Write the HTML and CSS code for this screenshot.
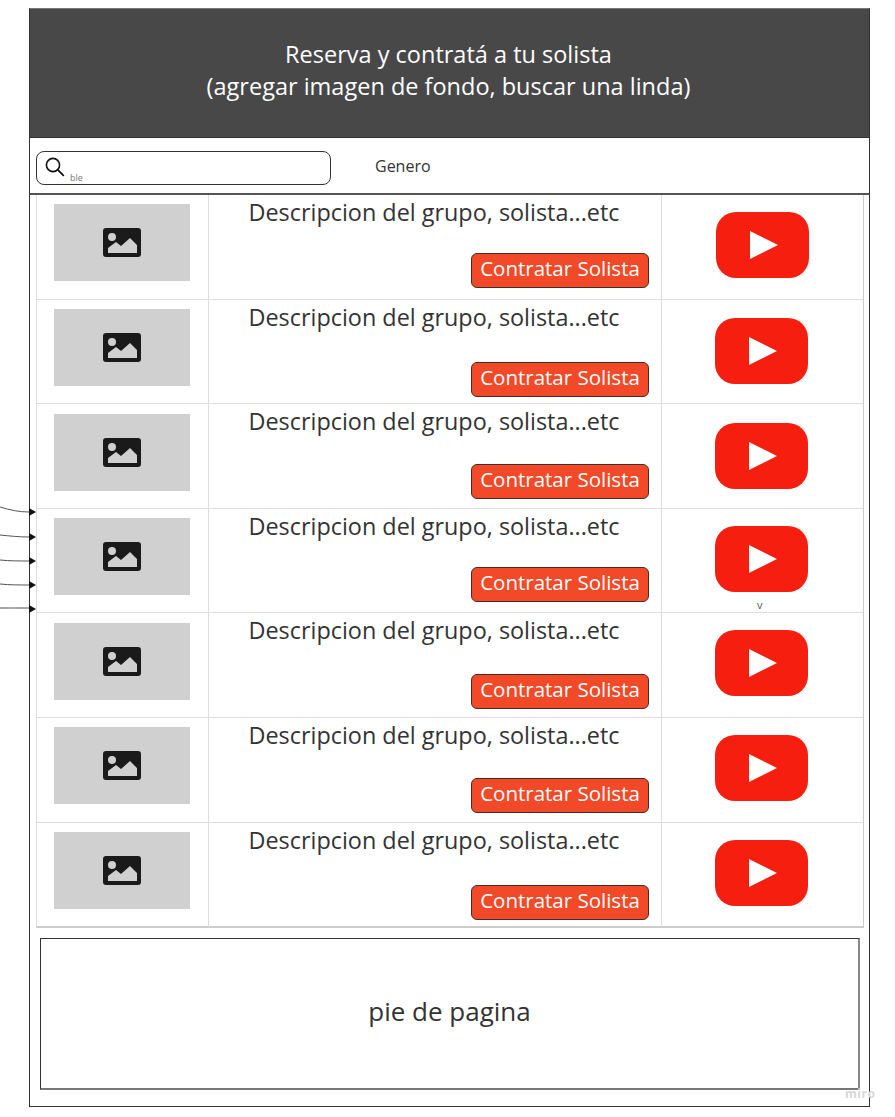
FILE: index.html
```html
<!DOCTYPE html>
<html lang="es">

<head>
    <meta charset="UTF-8">
    <meta name="viewport" content="width=device-width, initial-scale=1.0">
    <title>Reserva y contrata a tu solista</title>
    <link rel="stylesheet" href="styles.css">
</head>

<body>
    <svg class="defs" width="0" height="0" aria-hidden="true">
        <symbol id="icon-image" viewBox="0 0 38 29">
            <path fill-rule="evenodd" d="M3 0h32a3 3 0 0 1 3 3v23a3 3 0 0 1-3 3H3a3 3 0 0 1-3-3V3a3 3 0 0 1 3-3zM9 5a4 4 0 1 0 0 8 4 4 0 0 0 0-8zM5 25h29v-8l-7-7-9 8-5-4-8 6v5z" fill="#1a1a1a"/>
        </symbol>
        <symbol id="icon-play" viewBox="0 0 93 66">
            <rect width="93" height="66" rx="20" fill="#f61e0f"/>
            <path d="M34 19l28 14-28 14z" fill="#fff"/>
        </symbol>
    </svg>

    <div class="frame">
        <header class="hero">
            <p>Reserva y contratá a tu solista</p>
            <p>(agregar imagen de fondo, buscar una linda)</p>
        </header>

        <div class="toolbar">
            <div class="search">
                <svg class="search-icon" viewBox="0 0 20 20" width="20" height="20">
                    <circle cx="8" cy="8" r="6.6" fill="none" stroke="#111" stroke-width="1.6"/>
                    <path d="M12.8 12.8l6 6" stroke="#111" stroke-width="1.8"/>
                </svg>
                <span class="search-hint">ble</span>
            </div>
            <span class="genre">Genero</span>
        </div>

        <div class="list">
            <div class="row row-1">
                <div class="cell"><div class="thumb"><svg class="thumb-icon"><use href="#icon-image"/></svg></div></div>
                <div class="cell info">
                    <p class="desc">Descripcion del grupo, solista...etc</p>
                    <button class="hire">Contratar Solista</button>
                </div>
                <div class="cell video"><svg class="play"><use href="#icon-play"/></svg></div>
            </div>
            <div class="row row-2">
                <div class="cell"><div class="thumb"><svg class="thumb-icon"><use href="#icon-image"/></svg></div></div>
                <div class="cell info">
                    <p class="desc">Descripcion del grupo, solista...etc</p>
                    <button class="hire">Contratar Solista</button>
                </div>
                <div class="cell video"><svg class="play"><use href="#icon-play"/></svg></div>
            </div>
            <div class="row row-3">
                <div class="cell"><div class="thumb"><svg class="thumb-icon"><use href="#icon-image"/></svg></div></div>
                <div class="cell info">
                    <p class="desc">Descripcion del grupo, solista...etc</p>
                    <button class="hire">Contratar Solista</button>
                </div>
                <div class="cell video"><svg class="play"><use href="#icon-play"/></svg></div>
            </div>
            <div class="row row-4">
                <div class="cell"><div class="thumb"><svg class="thumb-icon"><use href="#icon-image"/></svg></div></div>
                <div class="cell info">
                    <p class="desc">Descripcion del grupo, solista...etc</p>
                    <button class="hire">Contratar Solista</button>
                </div>
                <div class="cell video"><svg class="play"><use href="#icon-play"/></svg><span class="stray">v</span></div>
            </div>
            <div class="row row-5">
                <div class="cell"><div class="thumb"><svg class="thumb-icon"><use href="#icon-image"/></svg></div></div>
                <div class="cell info">
                    <p class="desc">Descripcion del grupo, solista...etc</p>
                    <button class="hire">Contratar Solista</button>
                </div>
                <div class="cell video"><svg class="play"><use href="#icon-play"/></svg></div>
            </div>
            <div class="row row-6">
                <div class="cell"><div class="thumb"><svg class="thumb-icon"><use href="#icon-image"/></svg></div></div>
                <div class="cell info">
                    <p class="desc">Descripcion del grupo, solista...etc</p>
                    <button class="hire">Contratar Solista</button>
                </div>
                <div class="cell video"><svg class="play"><use href="#icon-play"/></svg></div>
            </div>
            <div class="row row-7">
                <div class="cell"><div class="thumb"><svg class="thumb-icon"><use href="#icon-image"/></svg></div></div>
                <div class="cell info">
                    <p class="desc">Descripcion del grupo, solista...etc</p>
                    <button class="hire">Contratar Solista</button>
                </div>
                <div class="cell video"><svg class="play"><use href="#icon-play"/></svg></div>
            </div>
        </div>

        <footer class="page-foot">pie de pagina</footer>
    </div>

    <!-- flechas del tablero que entran desde la izquierda -->
    <svg class="arrows" width="37" height="110" viewBox="0 0 37 110">
        <path d="M0 2c10 3 19 5 29 5M0 30c10 1 19 2 29 2M0 55c10 1 19 1 29 1M0 79c10 1 19 1 29 1M0 103c10 0 19 0 29 0" fill="none" stroke="#555"/>
        <path d="M29 3l7 4-7 4zM29 28l7 4-7 4zM29 52l7 4-7 4zM29 76l7 4-7 4zM29 100l7 4-7 4z" fill="#111"/>
    </svg>

    <span class="watermark">miro</span>
</body>

</html>
```

FILE: styles.css
```css
body {
    margin: 0;
    font-family: "Open Sans", sans-serif;
    background-color: #fff;
    color: #333;
}

p {
    margin: 0;
}

.defs {
    position: absolute;
}

.frame {
    box-sizing: border-box;
    width: 841px;
    height: 1099px;
    margin: 8px 0 0 29px;
    border: 1px solid #333;
    border-top-color: #777;
}

.hero {
    box-sizing: border-box;
    height: 129px;
    padding: 29px 2px 0 0;
    background-color: #484848;
    border-bottom: 1px solid #333;
    color: #fff;
    font-size: 23.5px;
    line-height: 32px;
    text-align: center;
}

/* Search bar */
.toolbar {
    box-sizing: border-box;
    display: flex;
    align-items: center;
    height: 57px;
    padding-left: 6px;
    border-bottom: 2px solid #555;
}

.search {
    position: relative;
    box-sizing: border-box;
    width: 295px;
    height: 34px;
    margin-top: 5px;
    border: 1px solid #333;
    border-radius: 8px;
}

.search-icon {
    position: absolute;
    left: 8px;
    top: 5px;
}

.search-hint {
    position: absolute;
    left: 33px;
    bottom: 1px;
    font-size: 9px;
    line-height: 11px;
    color: #777;
}

.genre {
    margin-left: 44px;
    font-size: 16px;
    color: #333;
}

/* Rows */
.list {
    box-sizing: border-box;
    width: 828px;
    height: 733px;
    margin-left: 6px;
    border: solid #ccc;
    border-width: 0 1px 2px 1px;
    border-left-color: #ddd;
}

.row {
    display: grid;
    grid-template-columns: 172px 453px 1fr;
    height: 104.6px;
    box-sizing: border-box;
    border-bottom: 1px solid #ddd;
}

.row:last-child {
    border-bottom: none;
}

.row-1 { --btn-top: 26px; --play-top: 17px; --play-left: 54px; }
.row-2 { --btn-top: 30px; --play-top: 18px; --play-left: 53px; }
.row-3 { --btn-top: 28px; --play-top: 19px; --play-left: 53px; }
.row-4 { --btn-top: 26.5px; --play-top: 17.5px; --play-left: 53px; }
.row-5 { --btn-top: 28.5px; --play-top: 17px; --play-left: 53px; }
.row-6 { --btn-top: 28px; --play-top: 17px; --play-left: 53px; }
.row-7 { --btn-top: 30px; --play-top: 17px; --play-left: 53px; }

.cell {
    position: relative;
    min-width: 0;
    border-right: 1px solid #ddd;
}

.cell:last-child {
    border-right: none;
}

.thumb {
    display: flex;
    align-items: center;
    justify-content: center;
    width: 136px;
    height: 77px;
    margin: 9.4px 0 0 17px;
    background-color: #d0d0d0;
}

.thumb-icon {
    width: 38px;
    height: 29px;
}

.info {
    display: flex;
    flex-direction: column;
    align-items: flex-start;
}

.desc {
    margin: 1px 0 0 39.5px;
    font-size: 23.4px;
    line-height: 32px;
    color: #333;
    white-space: nowrap;
}

.hire {
    box-sizing: border-box;
    width: 178px;
    height: 35px;
    margin: calc(var(--btn-top) - 1px) 0 0 262px;
    padding: 0 0 7px;
    background-color: #f24a28;
    border: 1px solid #4a2a20;
    border-radius: 6px;
    color: #fff;
    font-family: "Open Sans", sans-serif;
    font-size: 20.5px;
    line-height: 28px;
}

.play {
    display: block;
    width: 93px;
    height: 66px;
    margin: var(--play-top) 0 0 var(--play-left);
}

.stray {
    position: absolute;
    left: 95px;
    top: 90px;
    font-size: 11px;
    line-height: 12px;
    color: #555;
}

/* Footer */
.page-foot {
    box-sizing: border-box;
    display: flex;
    align-items: center;
    justify-content: center;
    width: 820px;
    height: 152px;
    margin: 10px 0 0 10px;
    padding-bottom: 6px;
    border: 1px solid #333;
    border-right: 2px solid #888;
    border-bottom: 2px solid #777;
    font-size: 26px;
    color: #333;
}

.arrows {
    position: absolute;
    left: 0;
    top: 505px;
}

.watermark {
    position: absolute;
    left: 845px;
    top: 1085px;
    font-size: 12px;
    font-weight: 700;
    letter-spacing: 0.5px;
    color: #d8d8d8;
}
```
